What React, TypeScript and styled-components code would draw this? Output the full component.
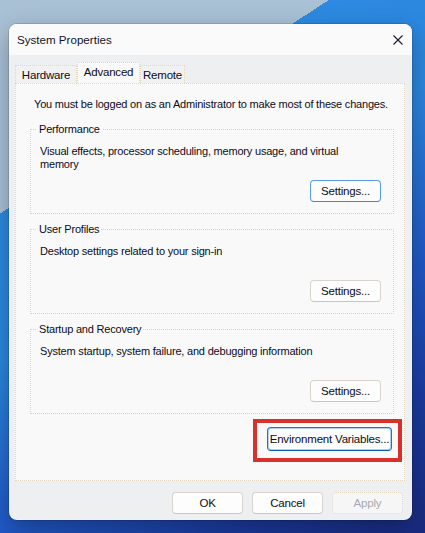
import React from "react";
import styled, { createGlobalStyle } from "styled-components";

const GlobalStyle = createGlobalStyle`
  html, body { margin: 0; padding: 0; }
  body { font-family: "Liberation Sans", Arial, sans-serif; }
  * { box-sizing: border-box; }
`;

const Desktop = styled.div`
  width: 425px;
  height: 533px;
  overflow: hidden;
  padding: 24px 13px 0 9px;
  background: linear-gradient(
    147deg,
    #a9c1d5 0%,
    #a9c1d5 26.4%,
    #2d8ae0 26.4%,
    #2b86de 45%,
    #2058c6 66%,
    #1a3a9e 84%,
    #1a2a80 100%
  );
`;

const Window = styled.div`
  width: 403px;
  height: 496px;
  border-radius: 8px;
  background: #eeeff1;
  box-shadow: 0 0 0 1px rgba(0, 0, 0, 0.12), 0 8px 24px rgba(0, 0, 0, 0.3);
  overflow: hidden;
  display: flex;
  flex-direction: column;
  color: #0c0c22;
  font-size: 11px;
  letter-spacing: -0.2px;
`;

const TitleBar = styled.div`
  height: 31px;
  flex: none;
  background: #fafafa;
  display: flex;
  align-items: center;
  justify-content: space-between;
  padding: 0 9px 0 8px;
`;

const Title = styled.span`
  font-size: 11.6px;
  letter-spacing: 0;
  color: #14142a;
`;

const CloseIcon = styled.svg`
  width: 10px;
  height: 10px;
  display: block;
`;

const Body = styled.div`
  flex: 1;
  display: flex;
  flex-direction: column;
  padding: 7px 7px 6px 6px;
`;

const TabStrip = styled.div`
  height: 21px;
  display: flex;
  align-items: flex-end;
`;

const Tab = styled.div<{ $active?: boolean; $w: number }>`
  width: ${(p) => p.$w}px;
  height: ${(p) => (p.$active ? 21 : 18)}px;
  background: ${(p) => (p.$active ? "#f9f9f9" : "#f1f1f2")};
  border: 1px dotted #e4d8c2;
  border-bottom: none;
  display: flex;
  align-items: center;
  justify-content: center;
  padding-bottom: ${(p) => (p.$active ? 3 : 0)}px;
  font-size: 11.5px;
`;

const Panel = styled.div`
  width: 390px;
  height: 398px;
  background: #f9f9f9;
  border: 1px dotted #e4d8c2;
  padding: 13px 10px 0 14px;
  display: flex;
  flex-direction: column;
`;

const Note = styled.div`
  line-height: 14px;
  margin-left: 4px;
  white-space: nowrap;
`;

const GroupBox = styled.div<{ $first?: boolean }>`
  margin-top: ${(p) => (p.$first ? 18 : 15)}px;
  height: 85px;
  border: 1px dotted #e2d4bb;
  padding: 0 12px 11px 9px;
  display: flex;
  flex-direction: column;
`;

const Legend = styled.div`
  align-self: flex-start;
  margin: -8px 0 0 -3px;
  padding: 0 2px;
  line-height: 14px;
  background: #f9f9f9;
`;

const Description = styled.div`
  margin-top: 9px;
  line-height: 13px;
  padding-right: 8px;
`;

const ButtonRow = styled.div`
  margin-top: auto;
  display: flex;
  justify-content: flex-end;
`;

type Variant = "normal" | "focus" | "accent" | "disabled";

const Button = styled.button<{ $variant?: Variant; $w: number; $h?: number }>`
  width: ${(p) => p.$w}px;
  height: ${(p) => p.$h ?? 22}px;
  font-family: "Liberation Sans", Arial, sans-serif;
  font-size: 11.5px;
  letter-spacing: -0.2px;
  white-space: nowrap;
  padding: 0;
  border-radius: 4px;
  color: ${(p) => (p.$variant === "disabled" ? "#a9a9b0" : "#0c0c22")};
  background: ${(p) => (p.$variant === "disabled" ? "#f6f6f6" : "#fdfdfd")};
  border: 1px
    ${(p) => (p.$variant === "disabled" ? "dotted" : "solid")}
    ${(p) =>
      p.$variant === "accent"
        ? "#1f74d0"
        : p.$variant === "focus"
        ? "#5b9be6"
        : p.$variant === "disabled"
        ? "#e2d6bf"
        : "#d8d4cc"};
  border-bottom-color: ${(p) =>
    p.$variant === "accent"
      ? "#0a5bb4"
      : p.$variant === "focus"
      ? "#3f86dc"
      : p.$variant === "disabled"
      ? "#e2d6bf"
      : "#c2c6cf"};
  box-shadow: ${(p) =>
    p.$variant === "accent" ? "inset 0 0 0 1px rgba(31,116,208,0.35)" : "none"};
`;

const HighlightRow = styled.div`
  margin-top: 5px;
  margin-right: -8px;
  display: flex;
  justify-content: flex-end;
`;

const RedFrame = styled.div`
  border: 4px solid #d8302a;
  padding: 4px 6px 7px 10px;
  display: flex;
`;

const Footer = styled.div`
  display: flex;
  justify-content: flex-end;
  gap: 9px;
  padding: 11px 2px 0 0;
`;

const groups = [
  {
    title: "Performance",
    text: "Visual effects, processor scheduling, memory usage, and virtual memory",
    variant: "focus" as Variant,
  },
  {
    title: "User Profiles",
    text: "Desktop settings related to your sign-in",
    variant: "normal" as Variant,
  },
  {
    title: "Startup and Recovery",
    text: "System startup, system failure, and debugging information",
    variant: "normal" as Variant,
  },
];

export default function App() {
  return (
    <>
      <GlobalStyle />
      <Desktop>
        <Window>
          <TitleBar>
            <Title>System Properties</Title>
            <CloseIcon viewBox="0 0 10 10">
              <path d="M0.5 0.5 L9.5 9.5 M9.5 0.5 L0.5 9.5" stroke="#1a1a2e" strokeWidth="1.1" fill="none" />
            </CloseIcon>
          </TitleBar>
          <Body>
            <TabStrip>
              <Tab $w={62}>Hardware</Tab>
              <Tab $w={63} $active>
                Advanced
              </Tab>
              <Tab $w={45}>Remote</Tab>
            </TabStrip>
            <Panel>
              <Note>You must be logged on as an Administrator to make most of these changes.</Note>
              {groups.map((g, i) => (
                <GroupBox key={g.title} $first={i === 0}>
                  <Legend>{g.title}</Legend>
                  <Description>{g.text}</Description>
                  <ButtonRow>
                    <Button $w={71} $variant={g.variant}>
                      Settings...
                    </Button>
                  </ButtonRow>
                </GroupBox>
              ))}
              <HighlightRow>
                <RedFrame>
                  <Button $w={125} $h={24} $variant="accent">
                    Environment Variables...
                  </Button>
                </RedFrame>
              </HighlightRow>
            </Panel>
            <Footer>
              <Button $w={71}>OK</Button>
              <Button $w={71}>Cancel</Button>
              <Button $w={71} $variant="disabled">
                Apply
              </Button>
            </Footer>
          </Body>
        </Window>
      </Desktop>
    </>
  );
}
